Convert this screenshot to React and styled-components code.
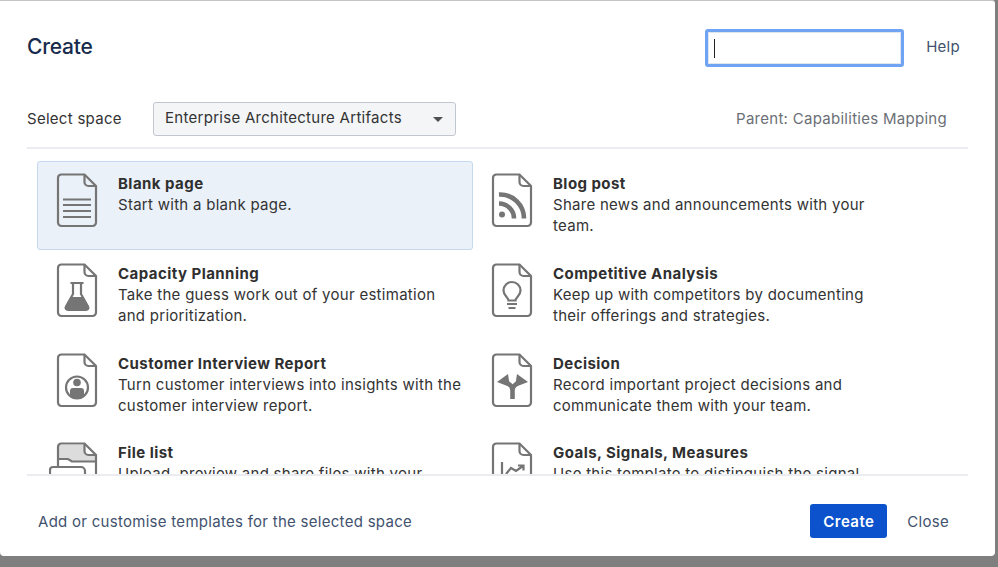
import React from "react";
import styled, { createGlobalStyle } from "styled-components";

const Global = createGlobalStyle`
  html, body { margin: 0; padding: 0; background: #7f7f7f; }
  body { font-family: Inter, "Liberation Sans", sans-serif; }
  * { box-sizing: border-box; }
`;

const Page = styled.div`
  width: 998px;
  height: 567px;
  overflow: hidden;
  background: #7f7f7f;
`;

const Dialog = styled.div`
  width: 995px;
  height: 556px;
  background: #fff;
  border-top: 1px solid #c4c4c4;
  border-radius: 0 3px 4px 4px;
  display: flex;
  flex-direction: column;
  font-size: 15px;
  letter-spacing: 0.28px;
`;

const Header = styled.header`
  height: 101px;
  flex: none;
  display: flex;
  align-items: flex-start;
  padding: 28px 35px 0 27px;
`;

const Title = styled.h1`
  margin: 3px 0 0;
  flex: 1;
  font-size: 21px;
  line-height: 30px;
  font-weight: 500;
  letter-spacing: -0.2px;
  color: #172b4d;
`;

const Search = styled.div`
  width: 199px;
  height: 38px;
  flex: none;
  border: 3px solid #6ea4f3;
  border-radius: 3px;
  background: #fff;
  box-shadow: inset 0 0 0 1px #dfe6f0;
  display: flex;
  align-items: center;
  padding-left: 6px;
  margin-right: 22px;
`;

const Caret = styled.span`
  width: 1px;
  height: 19px;
  background: #222;
`;

const HelpLink = styled.a`
  line-height: 36px;
  color: #42526e;
`;

const SpaceRow = styled.div`
  height: 47px;
  flex: none;
  margin: 0 27px;
  border-bottom: 2px solid #ebecf0;
  display: flex;
  align-items: flex-start;
`;

const SpaceLabel = styled.label`
  width: 126px;
  line-height: 34px;
  color: #333;
`;

const Select = styled.div`
  width: 303px;
  height: 34px;
  border: 1px solid #c1c7d0;
  border-radius: 3px;
  background: #f4f5f7;
  display: flex;
  align-items: center;
  justify-content: space-between;
  padding: 0 12px 3px 11px;
  color: #333;
`;

const Arrow = styled.span`
  width: 0;
  height: 0;
  margin-top: 4px;
  border-left: 5px solid transparent;
  border-right: 5px solid transparent;
  border-top: 5px solid #505050;
`;

const Parent = styled.div`
  margin-left: auto;
  margin-right: 21px;
  line-height: 34px;
  color: #6b6f76;
`;

const Gallery = styled.div`
  height: 327px;
  flex: none;
  margin: 0 27px;
  overflow: hidden;
  border-bottom: 2px solid #ebecf0;
  padding: 12px 0 0 10px;
  display: grid;
  grid-template-columns: 435px 436px;
  grid-auto-rows: 89.75px;
  align-content: start;
`;

const Template = styled.div`
  border: 1px solid ${p => (p.$selected ? "#c5d9ee" : "transparent")};
  background: ${p => (p.$selected ? "#ebf1f9" : "transparent")};
  margin-right: ${p => (p.$selected ? "-1px" : "0")};
  border-radius: 3px;
  display: flex;
  align-items: flex-start;
  padding: 11px 0 0 17px;
  gap: 19px;
  height: 89px;
`;

const TemplateText = styled.div`
  flex: 1;
  min-width: 0;
  white-space: nowrap;
  line-height: 21px;
  color: #333;
`;

const TemplateName = styled.div`
  font-weight: 700;
  letter-spacing: 0.45px;
  color: #2f2f2f;
`;

const Footer = styled.footer`
  flex: 1;
  display: flex;
  align-items: center;
  padding: 10px 46px 0 38px;
  color: #42526e;
`;

const FooterLink = styled.a`
  flex: 1;
`;

const PrimaryButton = styled.button`
  width: 77px;
  height: 34px;
  border: none;
  border-radius: 3px;
  background: #0b52cc;
  color: #fff;
  font: 600 15px Inter, "Liberation Sans", sans-serif;
  letter-spacing: 0.45px;
  margin-right: 20px;
`;

const CloseLink = styled.a`
  color: #42526e;
`;

const Sheet = ({ children, wide }) => (
  <svg width={wide ? 50 : 44} height="56" viewBox={wide ? "-6 0 50 56" : "0 0 44 56"} fill="none" style={{ flex: "none", marginLeft: wide ? -6 : 0 }}>
    {children}
  </svg>
);

const Page0 = "M6 1.5h23.5L41 13v36.5a3.5 3.5 0 0 1-3.5 3.5h-31A3.5 3.5 0 0 1 3 49.5V5a3.5 3.5 0 0 1 3-3.5z";
const Fold = "M29.5 1.5V9a4 4 0 0 0 4 4H41";
const S = { stroke: "#757575", strokeWidth: 2.2 };
const FILL = "#757575";

const Base = () => (
  <>
    <path d={Page0} {...S} fill="none" />
    <path d={Fold} {...S} fill="none" />
  </>
);

const icons = {
  blank: (
    <Sheet>
      <Base />
      <path d="M8 26.5h28M8 32h28M8 38h28M8 44h28" {...S} />
    </Sheet>
  ),
  rss: (
    <Sheet>
      <Base />
      <circle cx="12" cy="41.5" r="3" fill={FILL} />
      <path d="M9 30.5a15 15 0 0 1 15 15M9 21.5a24 24 0 0 1 25 24" stroke={FILL} strokeWidth="4.6" />
    </Sheet>
  ),
  flask: (
    <Sheet>
      <Base />
      <path d="M15.5 20h13M18 20v11L11 43.5a2.2 2.2 0 0 0 2 3.3h18a2.2 2.2 0 0 0 2-3.3L26 31V20" stroke={FILL} strokeWidth="2.2" />
      <path d="M15.5 34h13l5.5 10a2 2 0 0 1-2 3H12a2 2 0 0 1-2-3z" fill={FILL} />
    </Sheet>
  ),
  bulb: (
    <Sheet>
      <Base />
      <path d="M18.5 37.5c0-3-5-4.5-5-10a8.5 8.5 0 0 1 17 0c0 5.5-5 7-5 10z" stroke={FILL} strokeWidth="2.2" />
      <path d="M17 41h10M18.5 45h7" stroke={FILL} strokeWidth="2" />
    </Sheet>
  ),
  person: (
    <Sheet>
      <Base />
      <circle cx="22" cy="34.5" r="11" stroke={FILL} strokeWidth="2.2" />
      <circle cx="22" cy="29.5" r="3.8" fill={FILL} />
      <path d="M15 43v-5a3 3 0 0 1 3-3h8a3 3 0 0 1 3 3v5a11 11 0 0 1-14 0z" fill={FILL} />
    </Sheet>
  ),
  decision: (
    <Sheet>
      <Base />
      <path d="M22.5 46V37c0-4-3-6-7-8M22.5 37c0-4 3-6 7-8" stroke={FILL} strokeWidth="4.6" />
      <path d="M7 29l11-8 2 13zM38 29l-11-8-2 13z" fill={FILL} />
    </Sheet>
  ),
  files: (
    <Sheet wide>
      <path d="M4 3h25v7a3 3 0 0 0 3 3h8v6H17l-4-2H4z" fill="#dcdcdc" />
      <path d="M3 25V5a3.5 3.5 0 0 1 3-3.5h23.5L41 13v43" {...S} fill="none" />
      <path d={Fold} {...S} />
      <path d="M3 17h10l4 2.5h24" {...S} />
      <path d="M-5 34v-6a3 3 0 0 1 3-3h28a4 4 0 0 1 4 4v8" {...S} />
    </Sheet>
  ),
  chart: (
    <Sheet>
      <Base />
      <path d="M12 20v26h24" {...S} />
      <path d="M16 32l5-6 5 3 7-5M28 23.5h5.5v5" stroke={FILL} strokeWidth="2.2" />
    </Sheet>
  ),
};

const templates = [
  { icon: "blank", name: "Blank page", text: "Start with a blank page.", selected: true },
  { icon: "rss", name: "Blog post", text: <>Share news and announcements with your<br />team.</> },
  { icon: "flask", name: "Capacity Planning", text: <>Take the guess work out of your estimation<br />and prioritization.</> },
  { icon: "bulb", name: "Competitive Analysis", text: <>Keep up with competitors by documenting<br />their offerings and strategies.</> },
  { icon: "person", name: "Customer Interview Report", text: <>Turn customer interviews into insights with the<br />customer interview report.</> },
  { icon: "decision", name: "Decision", text: <>Record important project decisions and<br />communicate them with your team.</> },
  { icon: "files", name: "File list", text: <>Upload, preview and share files with your<br />team.</> },
  { icon: "chart", name: "Goals, Signals, Measures", text: <>Use this template to distinguish the signal<br />from the noise.</> },
];

export default function App() {
  return (
    <Page>
      <Global />
      <Dialog>
        <Header>
          <Title>Create</Title>
          <Search><Caret /></Search>
          <HelpLink>Help</HelpLink>
        </Header>
        <SpaceRow>
          <SpaceLabel>Select space</SpaceLabel>
          <Select>
            Enterprise Architecture Artifacts
            <Arrow />
          </Select>
          <Parent>Parent: Capabilities Mapping</Parent>
        </SpaceRow>
        <Gallery>
          {templates.map(t => (
            <Template key={t.name} $selected={t.selected}>
              {icons[t.icon]}
              <TemplateText>
                <TemplateName>{t.name}</TemplateName>
                {t.text}
              </TemplateText>
            </Template>
          ))}
        </Gallery>
        <Footer>
          <FooterLink>Add or customise templates for the selected space</FooterLink>
          <PrimaryButton>Create</PrimaryButton>
          <CloseLink>Close</CloseLink>
        </Footer>
      </Dialog>
    </Page>
  );
}
